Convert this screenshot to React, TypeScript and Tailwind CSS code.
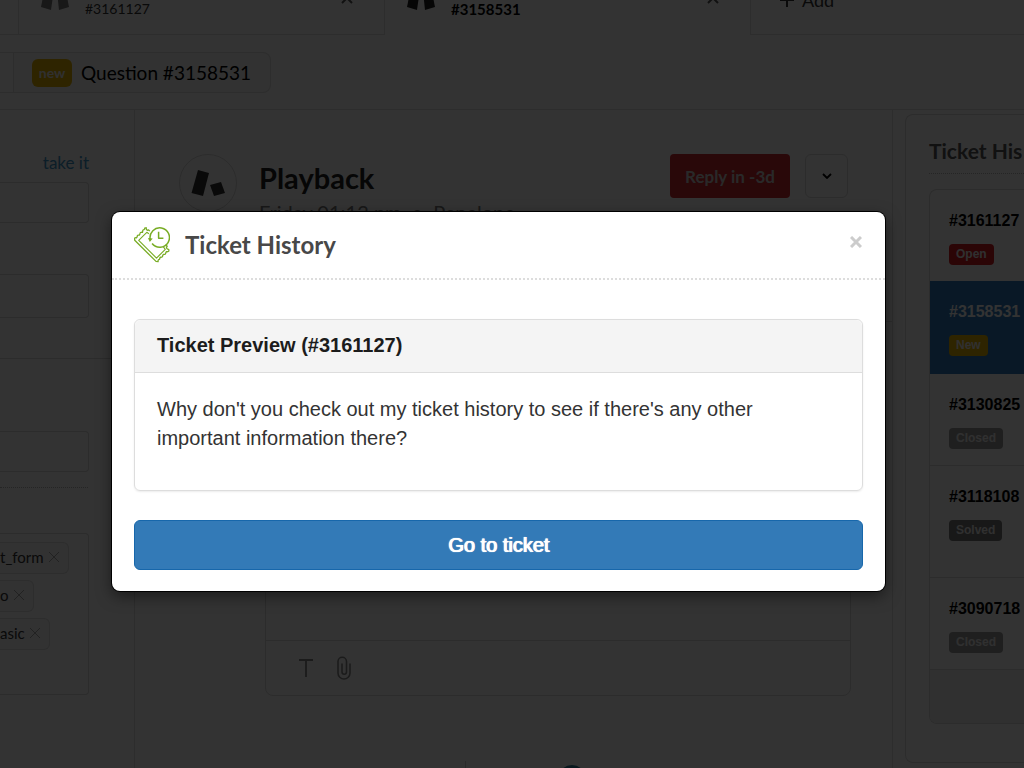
import React from "react";

type Status = "Open" | "New" | "Closed" | "Solved";

const statusColors: Record<Status, string> = {
  Open: "bg-[#d41c22] text-[#eee]",
  New: "bg-[#e6b400] text-[#eee]",
  Closed: "bg-[#9c9c9c] text-[#eee]",
  Solved: "bg-[#777777] text-[#eee]",
};

const tickets: { id: string; status: Status; row: string }[] = [
  { id: "#3161127", status: "Open", row: "h-[91px] text-black" },
  { id: "#3158531", status: "New", row: "h-[93px] bg-[#2d78bc] text-white" },
  { id: "#3130825", status: "Closed", row: "h-[91px] text-black" },
  { id: "#3118108", status: "Solved", row: "h-28 border-t border-[#d9d9d9] text-black" },
  { id: "#3090718", status: "Closed", row: "h-[92px] border-t border-[#d9d9d9] text-black" },
];

function Blocks({ className }: { className: string }) {
  return (
    <svg viewBox="0 0 28 28" className={className} fill="currentColor" aria-hidden="true">
      <path d="M5 0 14 0 10 28 0 25Z" />
      <path d="M15 0 23 0 28 25 18 28Z" />
    </svg>
  );
}

function Cross({ className }: { className: string }) {
  return (
    <svg viewBox="0 0 12 12" className={className} fill="none" stroke="currentColor" aria-hidden="true">
      <path d="M1 1 11 11M11 1 1 11" />
    </svg>
  );
}

function TicketClockIcon() {
  return (
    <svg viewBox="0 0 36 36" className="size-9 shrink-0 text-[#78ac24]" fill="none" stroke="currentColor" strokeLinejoin="round" aria-hidden="true">
      <path strokeWidth="1.3" d="M15.8 4.1 14.6 2.9q-1 .7-1.9-.2T12.400 .9L10.900.8Q10.700 3 8.900 3.200L8.500 5.300Q6 5 5.900 7L5.300 8.200Q3.200 7.700 3.200 9.700L2.500 10.800Q.7 10.500.6 11.400L.7 13.200 22 34.400 24.100 34.600Q23.800 32.500 25.500 32.300L26.200 30.200Q28.500 30.700 28.700 28.600L29.400 27.300Q31.700 27.900 31.800 25.800L32.300 24.700Q34.400 25 34.900 24L34.700 22.300Q33.300 22.500 32.700 21.300T33.200 19.200L31.600 17.600" />
      <path strokeWidth="1.1" d="M14.900 6.700 12.800 5.300 4.700 13.300 22.500 31.100 31.300 22.300 29 19.300" />
      <path strokeWidth="1.5" d="M16.200 12.300A9.700 9.700 0 1 1 18.100 16.500" />
      <path strokeWidth="1.500" d="M24.600 4.800V11.300H29.400" />
      <path d="M14 11 18.700 11.600 15.800 15Z" fill="currentColor" stroke="none" />
    </svg>
  );
}

function TopTabs() {
  return (
    <nav aria-label="Open tickets" className="flex h-[35px] shrink-0 overflow-hidden leading-5">
      <div className="w-[18px] shrink-0 border-b border-[#dedede]" />
      <div className="flex w-[367px] shrink-0 items-end border border-t-0 border-[#dedede] pr-[31px] pl-[22px] text-[14px] text-[#333]">
        <Blocks className="mb-6 size-7 text-[#777]" />
        <span className="mb-[15px] ml-4 flex-1">#3161127</span>
        <button aria-label="Close ticket #3161127" className="mb-[30px]">
          <Cross className="size-3 stroke-2 text-[#555]" />
        </button>
      </div>
      <div className="flex w-[365px] shrink-0 items-end border-b border-transparent pr-[31px] pl-[22px] text-[15px] font-bold text-black">
        <Blocks className="mb-6 size-7 text-[#222]" />
        <span className="mb-[15px] ml-4 flex-1">#3158531</span>
        <button aria-label="Close ticket #3158531" className="mb-[30px]">
          <Cross className="size-3 stroke-2 text-[#555]" />
        </button>
      </div>
      <div className="flex flex-1 items-end border-b border-l border-[#dedede] pl-[29px]">
        <button className="mb-6 flex items-center gap-2 text-[18px] leading-5 text-[#333]">
          <svg viewBox="0 0 14 14" className="size-3.5" stroke="currentColor" strokeWidth="2" aria-hidden="true">
            <path d="M7 0V14M0 7H14" />
          </svg>
          Add
        </button>
      </div>
    </nav>
  );
}

function Tag({ text }: { text: string }) {
  return (
    <li className="flex h-8 w-fit items-center gap-1 rounded-r-md border border-l-0 border-[#dedede] bg-[#f8f8f8] pr-2 pb-0.5 text-[15px] text-[#333]">
      {text}
      <button aria-label={`Remove ${text}`}>
        <Cross className="size-3 text-[#aaa]" />
      </button>
    </li>
  );
}

function Sidebar() {
  const field = "block w-[89px] rounded-r border border-l-0 border-[#d9d9d9] bg-white";
  return (
    <aside className="w-[135px] shrink-0 border-r border-[#dedede]">
      <div className="flex h-[72px] w-[89px] items-end justify-end pb-[7px]">
        <a href="#take" className="text-[17px] leading-6 text-[#3c94c8]">take it</a>
      </div>
      <input aria-label="Assignee" className={`${field} h-[41px]`} />
      <input aria-label="Followers" className={`${field} mt-[51px] h-11`} />
      <hr className="mt-10 border-[#ddd]" />
      <input aria-label="Form" className={`${field} mt-[72px] h-[41px]`} />
      <hr className="mt-[15px] w-[88px] border-dotted border-[#bbb]" />
      <ul aria-label="Tags" className="mt-[45px] flex h-[162px] w-[89px] flex-col gap-1.5 rounded-r border border-l-0 border-[#d9d9d9] py-2">
        <Tag text="t_form" />
        <Tag text="o" />
        <Tag text="asic" />
      </ul>
    </aside>
  );
}

function Conversation() {
  return (
    <main className="flex min-w-0 flex-1 flex-col border-r border-[#dedede]">
      <header className="flex h-[212px] shrink-0 items-start border-b border-[#dedede] pt-11 pr-11 pl-11">
        <div className="flex size-[58px] shrink-0 items-center justify-center rounded-full border border-[#d9d9d9]">
          <svg viewBox="0 0 34 28" className="h-7 w-[34px]" fill="#303030" aria-hidden="true">
            <path d="M7 1 18 4 12 27 .5 24Z" />
            <path d="M19 16 30 13 34 24 23 27Z" />
          </svg>
        </div>
        <div className="ml-[22px] flex-1">
          <h1 className="mt-1.5 text-[29px] leading-9 font-bold text-[#222]">Playback</h1>
          <p className="mt-0.5 flex gap-2.5 text-[20px] leading-7 text-[#777]">
            <span>Friday 01:12 pm</span>
            <span>•</span>
            <span>Penelope</span>
          </p>
        </div>
        <button className="h-11 w-[120px] rounded bg-[#cd282d] pt-0.5 text-[17px] font-bold text-[#ccc]">Reply in -3d</button>
        <button aria-label="More reply options" className="ml-[15px] flex h-11 w-[43px] items-center justify-center rounded-md border border-[#d9d9d9]">
          <svg viewBox="0 0 10 6" className="h-1.5 w-2.5" fill="none" stroke="black" strokeWidth="1.8" aria-hidden="true">
            <path d="M1 1 5 5 9 1" />
          </svg>
        </button>
      </header>
      <section aria-label="Reply editor" className="mt-[60px] mr-[41px] ml-[130px] flex h-[314px] shrink-0 flex-col rounded-lg border border-[#d9d9d9]">
        <textarea aria-label="Reply" className="flex-1 resize-none border-b border-[#d9d9d9]" />
        <div className="flex h-[54px] items-center gap-6 pl-[33px] text-[#888]">
          <button aria-label="Text format">
            <svg viewBox="0 0 14 18" className="h-[18px] w-3.5" fill="none" stroke="currentColor" strokeWidth="1.8" aria-hidden="true">
              <path d="M0 1H14M7 1V18" />
            </svg>
          </button>
          <button aria-label="Attach file">
            <svg viewBox="0 0 14 24" className="h-6 w-3.5" fill="none" stroke="currentColor" strokeWidth="1.6" strokeLinecap="round" aria-hidden="true">
              <path d="M13 8V17A6 6 0 0 1 1 17V5.500A4.200 4.200 0 0 1 9.500 5.500V16A2.200 2.200 0 0 1 5 16V8" />
            </svg>
          </button>
        </div>
      </section>
      <footer className="mt-[65px] flex h-10 shrink-0 items-start">
        <div className="h-10 w-[331px] border-r border-[#cfcfcf]" />
        <div className="mt-1 ml-[92px] size-7 rounded-full bg-[#2f7894]" />
      </footer>
    </main>
  );
}

function TicketList() {
  return (
    <aside className="w-[131px] shrink-0 overflow-hidden pt-1 pl-3">
      <div className="rounded-l-lg border border-r-0 border-[#d9d9d9] pb-[38px] pl-[23px]">
        <h2 className="pt-[22px] text-[21px] leading-7 font-bold whitespace-nowrap text-[#555]">Ticket His</h2>
        <hr className="mt-2 border-dotted border-[#bbb]" />
        <ul className="mt-[15px] overflow-hidden rounded-l-lg border border-r-0 border-[#d9d9d9] font-['Liberation_Sans',Arial,sans-serif]">
          {tickets.map((t) => (
            <li key={t.id} className={`${t.row} pt-[21px] pl-[19px]`}>
              <a href={t.id} className="block text-[16px] leading-5 font-bold">{t.id}</a>
              <span className={`mt-[13px] inline-block h-[21px] rounded px-[7px] align-top text-[12px] leading-5 font-bold ${statusColors[t.status]}`}>
                {t.status}
              </span>
            </li>
          ))}
          <li className="h-[54px] border-t border-[#d9d9d9] bg-[#f0f0f0]" />
        </ul>
      </div>
    </aside>
  );
}

function TicketDialog() {
  return (
    <div className="absolute inset-0 flex items-start bg-black/80 pt-[212px] pr-[139px] pl-28">
      <section role="dialog" aria-modal="true" aria-labelledby="dialog-title" className="min-w-0 flex-1 rounded-lg bg-white shadow-[0_0_0_1px_#000,0_5px_15px_rgba(0,0,0,0.5)]">
        <header className="flex h-[68px] items-center border-b-2 border-dotted border-[#ddd] pr-[22px] pl-[22px]">
          <TicketClockIcon />
          <h2 id="dialog-title" className="ml-[15px] flex-1 text-[24px] leading-8 font-bold text-[#484848]">Ticket History</h2>
          <button aria-label="Close" className="mb-1.5 flex w-3.5 justify-center text-[#ccc]">
            <Cross className="size-3 stroke-3" />
          </button>
        </header>
        <div className="px-[22px] pt-[39px] pb-[21px] font-['Liberation_Sans',Arial,sans-serif] text-[20px]">
          <article className="rounded-md border border-[#ddd] shadow-[0_1px_2px_rgba(0,0,0,0.08)]">
            <h3 className="rounded-t-md border-b border-[#ddd] bg-[#f4f4f4] px-[22px] pt-[11px] pb-[13px] leading-7 font-bold text-[#1c1c1c]">Ticket Preview (#3161127)</h3>
            <p className="px-[22px] pt-[22px] pb-[37px] leading-[29px] text-[#333]">
              Why don't you check out my ticket history to see if there's any other important information there?
            </p>
          </article>
          <button className="mt-[29px] h-[50px] w-full rounded-md border border-[#1767ab] bg-[#337ab7] text-white [text-shadow:0_0_1px_white,1px_0_0_white]">Go to ticket</button>
        </div>
      </section>
    </div>
  );
}

export default function App() {
  return (
    <div className="relative flex h-screen flex-col overflow-hidden bg-white font-['Lato','Open_Sans',sans-serif]">
      <TopTabs />
      <div className="flex h-[75px] shrink-0 items-start border-b border-[#dedede] pt-[17px]">
        <div className="h-[41px] w-3.5 border-y border-r border-[#e0e0e0]" />
        <div className="flex h-[41px] items-center rounded-r-lg border border-l-0 border-[#dedede] bg-[#f8f8f8] pr-[19px] pl-[18px]">
          <span className="flex h-7 w-10 items-center justify-center rounded-md bg-[#e6b400] text-[14px] font-bold text-[#eee]">new</span>
          <span className="ml-[9px] pt-0.5 text-[19px] text-black">Question #3158531</span>
        </div>
      </div>
      <div className="flex flex-1">
        <Sidebar />
        <Conversation />
        <TicketList />
      </div>
      <TicketDialog />
    </div>
  );
}
